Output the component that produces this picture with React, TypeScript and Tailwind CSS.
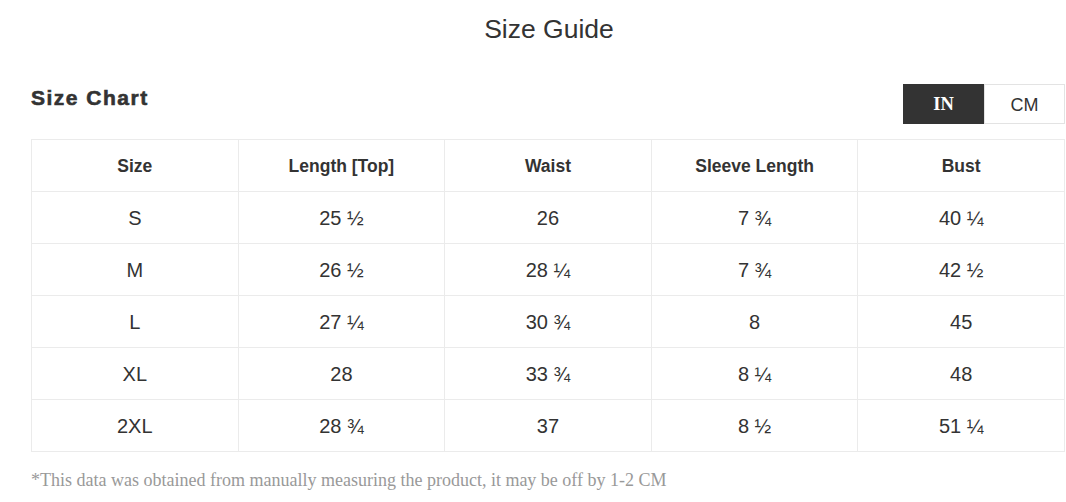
// Size guide panel

const HEADERS = ['Size', 'Length [Top]', 'Waist', 'Sleeve Length', 'Bust'];

const ROWS: string[][] = [
  ['S', '25 ½', '26', '7 ¾', '40 ¼'],
  ['M', '26 ½', '28 ¼', '7 ¾', '42 ½'],
  ['L', '27 ¼', '30 ¾', '8', '45'],
  ['XL', '28', '33 ¾', '8 ¼', '48'],
  ['2XL', '28 ¾', '37', '8 ½', '51 ¼'],
];

export default function App() {
  return (
    <div className="w-[1066px] h-[502px] bg-white pl-[31px] pr-[1px] pt-[13px] text-[#333] font-['Liberation_Sans',Arial,sans-serif]">
      <h1 className="text-center text-[26.5px] leading-[32px] pl-[2px]">Size Guide</h1>

      <div className="mt-[39px] flex items-start justify-between">
        <h2 className="text-[21px] leading-[28px] font-bold tracking-[1.5px] [-webkit-text-stroke:0.6px_#333]">
          Size Chart
        </h2>
        <div className="flex h-[40px]">
          <button className="w-[81px] bg-[#333] text-white font-bold text-[18.5px] pt-[2px] font-['Liberation_Serif','Times_New_Roman',serif]">
            IN
          </button>
          <button className="w-[81px] border border-[#e3e3e3] text-[18px] pt-[2px] text-[#333]">CM</button>
        </div>
      </div>

      <table className="mt-[15px] w-full table-fixed border-collapse">
        <thead>
          <tr>
            {HEADERS.map((h) => (
              <th
                key={h}
                className="h-[52px] border border-[#ebebeb] text-center text-[17.5px] font-bold pt-[2px]"
              >
                {h}
              </th>
            ))}
          </tr>
        </thead>
        <tbody>
          {ROWS.map((row) => (
            <tr key={row[0]}>
              {row.map((cell, i) => (
                <td
                  key={i}
                  className="h-[52px] border border-[#ebebeb] text-center text-[20px]"
                >
                  {cell}
                </td>
              ))}
            </tr>
          ))}
        </tbody>
      </table>

      <p className="mt-[16px] text-[18px] leading-[24px] text-[#999] font-['Liberation_Serif','Times_New_Roman',serif]">
        *This data was obtained from manually measuring the product, it may be off by 1-2 CM
      </p>
    </div>
  );
}
